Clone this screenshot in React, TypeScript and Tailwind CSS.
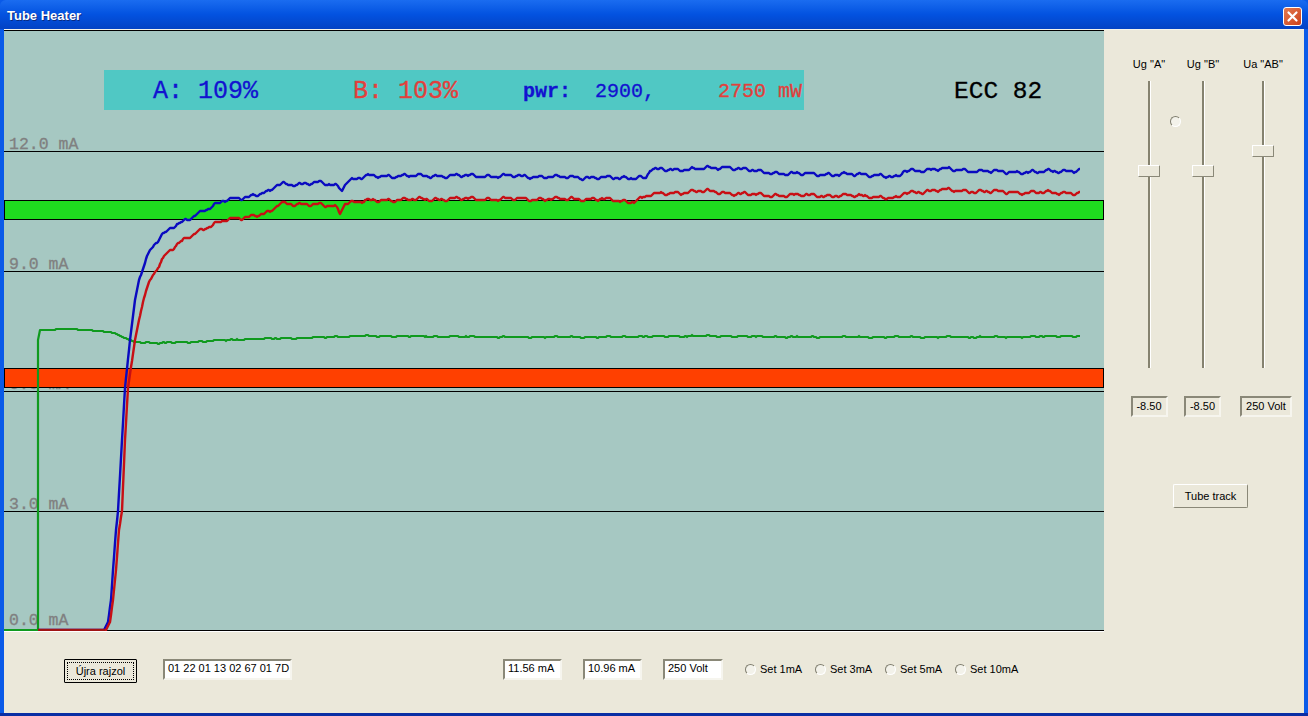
type Pt = [number, number];

const blueKeys: Pt[] = [
  [38, 630], [104, 630], [108, 622], [111, 600], [113, 570], [116, 530], [118, 511], [122, 440], [125, 388],
  [130, 340], [135, 300], [139, 280], [143, 267], [150, 250], [160, 237], [172, 228], [183, 222], [200, 212],
  [227, 200], [250, 196], [270, 192], [278, 184], [300, 184], [320, 183], [338, 186], [342, 189], [347, 181],
  [370, 176], [400, 176], [500, 176], [620, 178], [640, 177], [646, 178], [650, 170], [700, 169], [730, 167],
  [760, 172], [800, 174], [880, 175], [898, 178], [904, 171], [940, 169], [1000, 172], [1040, 172], [1080, 170],
];

const redKeys: Pt[] = [
  [38, 630], [106, 630], [110, 622], [113, 600], [116, 570], [119, 530], [122, 511], [125, 440], [128, 388],
  [135, 340], [143, 300], [150, 280], [157, 268], [165, 256], [177, 245], [188, 237], [200, 230], [227, 220],
  [250, 216], [270, 213], [280, 203], [300, 204], [335, 206], [340, 212], [345, 203], [380, 200], [450, 199],
  [600, 199], [630, 202], [650, 195], [700, 191], [730, 193], [760, 195], [870, 196], [898, 199], [904, 193],
  [940, 190], [1000, 192], [1080, 193],
];

const greenKeys: Pt[] = [
  [38, 340], [40, 330], [70, 329], [100, 331], [115, 333], [125, 338], [135, 342], [160, 343], [190, 342],
  [250, 339], [300, 338], [360, 336], [500, 337], [600, 337], [700, 336], [800, 337], [1000, 337], [1080, 336],
];

function valueAt(keys: Pt[], x: number) {
  for (let i = 1; i < keys.length; i++) {
    if (x <= keys[i][0]) {
      const [x0, y0] = keys[i - 1];
      const [x1, y1] = keys[i];
      return y0 + ((y1 - y0) * (x - x0)) / (x1 - x0);
    }
  }
  return keys[keys.length - 1][1];
}

// same wobble on both plate traces, the real ones move together
function jitter(x: number, amp: number) {
  if (x < 140) return 0;
  return amp * (Math.sin(x * 0.37) * 1.1 + Math.sin(x * 0.13 + 1) * 0.7 + Math.sin(x * 0.83 + 2) * 0.7);
}

function trace(keys: Pt[], amp: number) {
  const pts: string[] = [];
  const start = keys[0][0];
  const end = keys[keys.length - 1][0];
  for (let x = start; x <= end; x++) {
    pts.push(`${x},${Math.round(valueAt(keys, x) + jitter(x, amp))}`);
  }
  return pts.join(' ');
}

const gridLines = [151, 271, 391, 511, 630];

const scaleLabels = [
  { text: '12.0 mA', className: 'top-[105px]' },
  { text: '9.0 mA', className: 'top-[225px]' },
  { text: '6.0 mA', className: 'top-[345px]' },
  { text: '3.0 mA', className: 'top-[465px]' },
  { text: '0.0 mA', className: 'top-[581px]' },
];

function Chart() {
  return (
    <div className="relative w-[1100px] h-[602px] bg-[#a6c8c2] border-t border-b border-t-black border-b-white overflow-hidden font-['Liberation_Mono',monospace] [-webkit-text-stroke:0.3px]">
      {scaleLabels.map(l => (
        <span key={l.text} className={`absolute left-[5px] text-[16.5px] leading-[18px] whitespace-pre text-[#808080] ${l.className}`}>
          {l.text}
        </span>
      ))}

      <svg className="absolute left-0 top-0" width="1100" height="600" viewBox="4 31 1100 600" fill="none">
        {gridLines.map(y => (
          <line key={y} x1="4" x2="1104" y1={y + 0.5} y2={y + 0.5} stroke="#000" strokeWidth="1" />
        ))}
        <rect x="4.5" y="200.5" width="1099" height="19" fill="#1fdc1f" stroke="#000" />
        <rect x="4.5" y="368.5" width="1099" height="19" fill="#ff4000" stroke="#000" />
        <line x1="4" x2="38" y1="630" y2="630" stroke="#0f9a1e" strokeWidth="2" />
        <polyline points={`38,630 38,340 ${trace(greenKeys, 0.35)}`} stroke="#0f9a1e" strokeWidth="2.2" strokeLinejoin="round" />
        <polyline points={trace(blueKeys, 1)} stroke="#0a0ac0" strokeWidth="2.4" strokeLinejoin="round" />
        <polyline points={trace(redKeys, 1)} stroke="#c80f14" strokeWidth="2.4" strokeLinejoin="round" />
        <line x1="38" x2="105" y1="630" y2="630" stroke="#a01414" strokeWidth="2" />
      </svg>

      <div className="absolute left-[100px] top-[39px] w-[700px] h-[40px] bg-[#50c8c4]">
        <span className="absolute left-[49px] top-[7px] text-[25px] leading-[30px] whitespace-pre text-[#1212d0]">A: 109%</span>
        <span className="absolute left-[249px] top-[7px] text-[25px] leading-[30px] whitespace-pre text-[#e2403c]">B: 103%</span>
        <span className="absolute left-[419px] top-[9px] text-[20px] leading-[26px] whitespace-pre text-[#1212d0] font-bold">pwr:</span>
        <span className="absolute left-[491px] top-[9px] text-[20px] leading-[26px] whitespace-pre text-[#1212d0]">2900,</span>
        <span className="absolute left-[614px] top-[9px] text-[20px] leading-[26px] whitespace-pre text-[#e2403c]">2750 mW</span>
      </div>

      <span className="absolute left-[950px] top-[46px] text-[24.5px] leading-[30px] whitespace-pre text-black">ECC 82</span>
    </div>
  );
}

function Slider({ label, value, thumbClass, colClass, boxClass }: { label: string; value: string; thumbClass: string; colClass: string; boxClass: string }) {
  return (
    <div className={`flex flex-col items-center ${colClass}`}>
      <div className="h-[14px] leading-[14px] mt-[26px] whitespace-pre">{label}</div>
      <div className="relative w-[3px] h-[287px] mt-[10px] bg-[#85826f] border-r border-white">
        <div className={`absolute left-[-10px] w-[22px] h-[12px] bg-[#ebe8da] border border-t-white border-l-white border-r-[#8a8878] border-b-[#8a8878] rounded-[1px] ${thumbClass}`} />
      </div>
      <div className={`mt-[28px] h-[21px] leading-[17px] text-center border-2 border-t-[#8a8878] border-l-[#8a8878] border-r-[#f6f5ee] border-b-[#f6f5ee] ${boxClass}`}>
        {value}
      </div>
    </div>
  );
}

function SideField({ children, className }: { children: string; className: string }) {
  return (
    <div className={`h-[21px] leading-[15px] pl-[3px] bg-white whitespace-pre border-2 border-t-[#8a8878] border-l-[#8a8878] border-r-[#f6f5ee] border-b-[#f6f5ee] ${className}`}>
      {children}
    </div>
  );
}

function Radio({ label }: { label: string }) {
  return (
    <div className="w-[70px] flex items-center gap-[4px] h-[21px]">
      <span className="w-[11px] h-[11px] rounded-full bg-[#f3f2ea] border border-t-[#7f7d6e] border-l-[#7f7d6e] border-r-white border-b-white" />
      <span className="whitespace-pre">{label}</span>
    </div>
  );
}

export default function App() {
  return (
    <div className="w-[1308px] h-[716px] overflow-hidden flex flex-col bg-[#0a5ae8] font-['Liberation_Sans',Arial,sans-serif] text-[11px] text-black">
      <div className="h-[29px] shrink-0 flex items-center justify-between pt-[3px] pl-[7px] pr-[6px] rounded-t-[6px] bg-gradient-to-b from-[#1a6cf0] via-[#0352e0] to-[#0342c4]">
        <span className="text-white font-bold text-[13px] [text-shadow:1px_1px_0_#0a2a80]">Tube Heater</span>
        <div className="w-[19px] h-[19px] rounded-[3px] border border-white bg-gradient-to-br from-[#e2794f] to-[#cc3f18] flex items-center justify-center">
          <svg width="13" height="13" viewBox="0 0 13 13" fill="none">
            <path d="M2.5 2.5l8 8M10.5 2.5l-8 8" stroke="#fff" strokeWidth="2.2" strokeLinecap="round" />
          </svg>
        </div>
      </div>

      <div className="flex-1 flex flex-col mx-[4px] bg-[#ebe8da] border-t border-[#f4f3ec] min-h-0">
        <div className="flex">
          <Chart />
          <div className="relative flex-1 flex flex-col">
            <div className="flex pl-[18px]">
              <Slider label={'Ug "A"'} value="-8.50" thumbClass="top-[84px]" colClass="w-[54px] pt-[1px]" boxClass="w-[37px]" />
              <Slider label={'Ug "B"'} value="-8.50" thumbClass="top-[84px]" colClass="w-[54px] pt-[1px]" boxClass="w-[37px] self-start ml-[8px]" />
              <Slider label={'Ua "AB"'} value="250 Volt" thumbClass="top-[64px]" colClass="w-[66px] pt-[1px]" boxClass="w-[52px] self-start ml-[10px]" />
            </div>
            <span className="absolute left-[66px] top-[86px] w-[11px] h-[11px] rounded-full bg-[#f3f2ea] border border-t-[#7f7d6e] border-l-[#7f7d6e] border-r-white border-b-white" />
            <div className="ml-[69px] mt-[67px] w-[75px] h-[24px] flex items-center justify-center bg-[#ebe8da] border border-t-white border-l-white border-r-[#8a8878] border-b-[#8a8878] rounded-[2px]">
              Tube track
            </div>
          </div>
        </div>

        <div className="flex items-start pt-[27px] pl-[60px]">
          <div className="w-[73px] h-[24px] p-[2px] bg-[#ebe8da] border border-black rounded-[1px]">
            <div className="h-full flex items-center justify-center border border-dotted border-black">Újra rajzol</div>
          </div>
          <SideField className="ml-[26px] w-[129px]">01 22 01 13 02 67 01 7D</SideField>
          <SideField className="ml-[211px] w-[59px]">11.56 mA</SideField>
          <SideField className="ml-[21px] w-[59px]">10.96 mA</SideField>
          <SideField className="ml-[21px] w-[60px]">250 Volt</SideField>
          <div className="flex ml-[22px]">
            <Radio label="Set 1mA" />
            <Radio label="Set 3mA" />
            <Radio label="Set 5mA" />
            <Radio label="Set 10mA" />
          </div>
        </div>
      </div>
      <div className="h-[3px] shrink-0 bg-[#0a2ea4]" />
    </div>
  );
}
